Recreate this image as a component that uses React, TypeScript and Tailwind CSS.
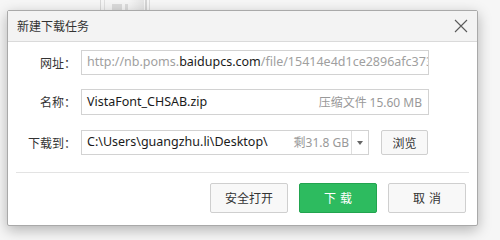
import React from "react";

const latin = { fontFamily: '"Noto Sans", "Open Sans", "Noto Sans CJK SC", sans-serif' };
const cjk = { fontFamily: '"Noto Sans CJK SC", "Noto Sans", sans-serif' };

export default function App() {
  return (
    <div className="relative w-[500px] h-[240px] overflow-hidden bg-[#f6f6f6]" style={cjk}>
      {/* faint background icon behind dialog */}
      <div className="absolute left-[100px] top-0 w-[1px] h-[10px] bg-[#d8d8d8]" />
      <div className="absolute left-[104px] top-0 w-[1px] h-[10px] bg-[#e0e0e0]" />
      <div className="absolute left-[112px] top-[4px] w-[10px] h-[6px] bg-[#dcdcdc]" />
      <div className="absolute left-[125px] top-[4px] w-[10px] h-[6px] bg-[#dcdcdc]" />
      <div className="absolute left-[145px] top-0 w-[2px] h-[10px] bg-[#d4d4d4]" />
      <div className="absolute left-[149px] top-0 w-[1px] h-[10px] bg-[#dcdcdc]" />
      <div className="absolute left-[128px] top-0 w-[16px] h-[10px] bg-gradient-to-r from-[#f6f6f6] to-[#e4e4e4]" />

      <div className="absolute left-[7px] top-[10px] w-[471px] h-[216px] bg-white border border-[#a9a9a9] rounded-[2px] shadow-[0_4px_14px_rgba(0,0,0,0.28)] flex flex-col">
        {/* title bar */}
        <div className="h-[31px] shrink-0 bg-[#f3f3f3] border-b border-[#dadada] flex items-center justify-between pl-[9px] pr-[8px]">
          <span className="text-[12px] text-[#333]">新建下载任务</span>
          <svg width="14" height="14" viewBox="0 0 14 14" className="mr-[1px]">
            <path d="M1 1 L13 13 M13 1 L1 13" stroke="#5a5a5a" strokeWidth="1.1" fill="none" />
          </svg>
        </div>

        {/* body */}
        <div className="flex flex-col gap-[14px] pt-[8px]">
          <div className="flex items-center">
            <div className="w-[73px] text-right text-[12px] text-[#333] pr-[5px]">网址：</div>
            <div className="w-[348px] h-[25px] border border-[#d2d2d2] flex items-center overflow-hidden whitespace-nowrap pl-[5px] text-[12.5px]" style={latin}>
              <span className="text-[#a0a0a0]">http://nb.poms.</span>
              <span className="text-[#1a1a1a]">baidupcs.com</span>
              <span className="text-[#a0a0a0]">/file/15414e4d1ce2896afc373a</span>
            </div>
          </div>
          <div className="flex items-center">
            <div className="w-[73px] text-right text-[12px] text-[#333] pr-[5px]">名称：</div>
            <div className="w-[348px] h-[26px] border border-[#d2d2d2] flex items-center justify-between whitespace-nowrap pl-[5px] pr-[6px]">
              <span className="text-[12.5px] text-[#1a1a1a]" style={latin}>VistaFont_CHSAB.zip</span>
              <span className="text-[12px] text-[#999]">
                压缩文件 <span style={latin}>15.60 MB</span>
              </span>
            </div>
          </div>
          <div className="flex items-center mt-[1px]">
            <div className="w-[73px] text-right text-[12px] text-[#333] pr-[5px]">下载到：</div>
            <div className="w-[288px] h-[25px] border border-[#d2d2d2] flex items-center whitespace-nowrap">
              <span className="flex-1 pl-[5px] text-[12.5px] text-[#1a1a1a]" style={latin}>C:\Users\guangzhu.li\Desktop\</span>
              <span className="text-[12px] text-[#999] pr-[2px]">
                剩<span style={latin}>31.8 GB</span>
              </span>
              <span className="w-[17px] h-full border-l border-[#dedede] flex items-center justify-center">
                <svg width="6" height="4" viewBox="0 0 6 4">
                  <path d="M0 0 L6 0 L3 4 Z" fill="#666" />
                </svg>
              </span>
            </div>
            <button className="ml-[12px] w-[47px] h-[25px] border border-[#cfcfcf] bg-[#f8f8f8] rounded-[2px] text-[12px] text-[#333] flex items-center justify-center">
              浏览
            </button>
          </div>
        </div>

        {/* separator */}
        <div className="mx-[8px] mt-[17px] h-[1px] bg-[#e3e3e3]" />

        {/* footer buttons */}
        <div className="flex justify-end gap-[11px] pr-[11px] pt-[10px]">
          <button className="w-[78px] h-[30px] border border-[#cfcfcf] bg-[#f8f8f8] rounded-[2px] text-[12px] text-[#333]">
            安全打开
          </button>
          <button className="w-[78px] h-[30px] border border-[#22a44f] bg-[#2dbb5f] rounded-[2px] text-[12px] text-white tracking-[4px] pl-[4px]">
            下载
          </button>
          <button className="w-[78px] h-[30px] border border-[#cfcfcf] bg-[#f8f8f8] rounded-[2px] text-[12px] text-[#333] tracking-[4px] pl-[4px]">
            取消
          </button>
        </div>
      </div>
    </div>
  );
}
